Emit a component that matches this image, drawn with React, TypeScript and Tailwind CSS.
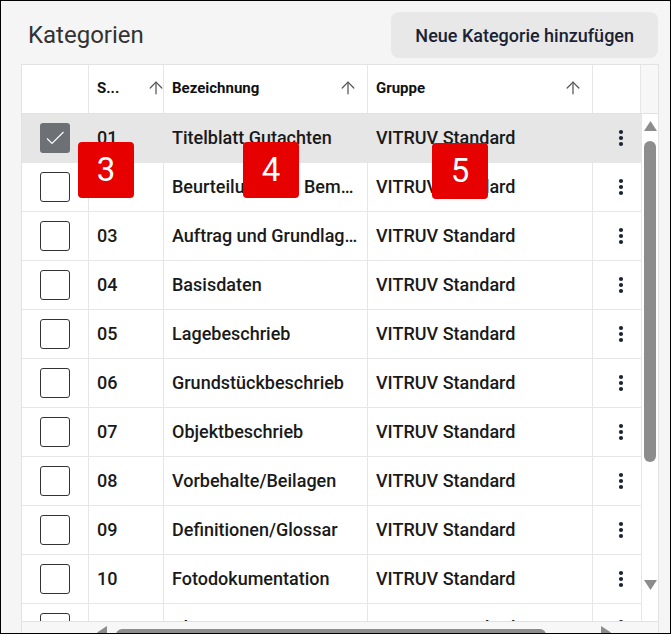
import { ArrowUp } from 'lucide-react'

const rows = [
  { nr: '01', name: 'Titelblatt Gutachten', group: 'VITRUV Standard', checked: true },
  { nr: '02', name: 'Beurteilung und Bemerkungen', group: 'VITRUV Standard' },
  { nr: '03', name: 'Auftrag und Grundlagen', group: 'VITRUV Standard' },
  { nr: '04', name: 'Basisdaten', group: 'VITRUV Standard' },
  { nr: '05', name: 'Lagebeschrieb', group: 'VITRUV Standard' },
  { nr: '06', name: 'Grundstückbeschrieb', group: 'VITRUV Standard' },
  { nr: '07', name: 'Objektbeschrieb', group: 'VITRUV Standard' },
  { nr: '08', name: 'Vorbehalte/Beilagen', group: 'VITRUV Standard' },
  { nr: '09', name: 'Definitionen/Glossar', group: 'VITRUV Standard' },
  { nr: '10', name: 'Fotodokumentation', group: 'VITRUV Standard' },
  { nr: '11', name: 'Pläne', group: 'VITRUV Standard' },
]

function Checkbox({ checked }: { checked?: boolean }) {
  if (checked) {
    return (
      <div className="w-[30px] h-[30px] rounded-[3px] bg-[#6d7176] flex items-center justify-center">
        <svg width="22" height="22" viewBox="0 0 22 22" fill="none">
          <path d="M3 11.5l5 5L19.5 5" stroke="white" strokeWidth="1.1" />
        </svg>
      </div>
    )
  }
  return <div className="w-[30px] h-[30px] rounded-[3px] border border-[#333] bg-white" />
}

function Dots() {
  return (
    <svg width="6" height="18" viewBox="0 0 6 18">
      <circle cx="3" cy="3" r="2.1" fill="#1c2433" />
      <circle cx="3" cy="9" r="2.1" fill="#1c2433" />
      <circle cx="3" cy="15" r="2.1" fill="#1c2433" />
    </svg>
  )
}

function Badge({ n, className }: { n: string; className: string }) {
  return (
    <div
      className={`absolute w-[56px] h-[56px] rounded-[4px] bg-[#e60000] text-white text-[33px] flex items-center justify-center ${className}`}
    >
      {n}
    </div>
  )
}

export default function App() {
  return (
    <div className="relative w-[671px] h-[634px] border border-black bg-[#f5f5f5] overflow-hidden font-['Roboto',sans-serif]">
      {/* Title bar */}
      <div className="flex items-center justify-between h-[63px] pt-[5px] pl-[27px] pr-[12px]">
        <h1 className="text-[24px] text-[#333] font-normal">Kategorien</h1>
        <button className="h-[46px] px-[24px] rounded-[8px] bg-[#e8e8e8] text-[18px] font-medium text-[#1a2234]">
          Neue Kategorie hinzufügen
        </button>
      </div>

      {/* Grid */}
      <div className="ml-[20px] w-[638px] border border-[#e2e2e2] bg-white">
        {/* Header */}
        <div className="flex h-[49px] border-b border-[#e2e2e2] text-[15px] font-bold text-[#111]">
          <div className="w-[67px] border-r border-[#e6e6e6]" />
          <div className="w-[75px] border-r border-[#e6e6e6] flex items-center pl-[8px] pb-[2px]">
            <span className="flex-1 truncate">S...</span>
            <ArrowUp size={20} strokeWidth={1.5} className="text-[#555] mr-[-3px]" />
          </div>
          <div className="w-[204px] border-r border-[#e6e6e6] flex items-center pl-[8px] pr-[9px] pb-[2px]">
            <span className="flex-1 truncate">Bezeichnung</span>
            <ArrowUp size={20} strokeWidth={1.5} className="text-[#555]" />
          </div>
          <div className="w-[225px] border-r border-[#e6e6e6] flex items-center pl-[8px] pr-[9px] pb-[2px]">
            <span className="flex-1 truncate">Gruppe</span>
            <ArrowUp size={20} strokeWidth={1.5} className="text-[#555]" />
          </div>
          <div className="w-[48px] border-r border-[#e6e6e6]" />
          <div className="w-[17px] bg-[#f7f7f7]" />
        </div>

        {/* Body */}
        <div className="flex h-[507px]">
          <div className="w-[619px] overflow-hidden">
            {rows.map((r) => (
              <div
                key={r.nr}
                className={`flex h-[49px] border-b border-[#e6e6e6] text-[18px] font-medium text-[#1a1a1a] ${
                  r.checked ? 'bg-[#e6e6e6]' : ''
                }`}
              >
                <div className="w-[67px] border-r border-[#e6e6e6] flex items-center justify-center pr-[1px]">
                  <Checkbox checked={r.checked} />
                </div>
                <div className="w-[75px] border-r border-[#e6e6e6] flex items-center pl-[8px] pb-[2px]">{r.nr}</div>
                <div className="w-[204px] border-r border-[#e6e6e6] flex items-center pl-[8px] pr-[8px] pb-[2px] min-w-0">
                  <span className="truncate">{r.name}</span>
                </div>
                <div className="w-[225px] border-r border-[#e6e6e6] flex items-center pl-[8px] pb-[2px]">{r.group}</div>
                <div className="w-[48px] flex items-center pl-[25px]">
                  <Dots />
                </div>
              </div>
            ))}
          </div>

          {/* Vertical scrollbar */}
          <div className="w-[17px] border-l border-[#e6e6e6] flex flex-col items-center pt-[7px]">
            <svg width="13" height="10" viewBox="0 0 13 10">
              <path d="M6.5 0L13 10H0z" fill="#8c8c8c" />
            </svg>
            <div className="mt-[10px] w-[12px] h-[321px] rounded-full bg-[#8d8d8d]" />
            <svg width="13" height="10" viewBox="0 0 13 10" className="mt-[118px]">
              <path d="M0 0h13L6.5 10z" fill="#8c8c8c" />
            </svg>
          </div>
        </div>

        {/* Horizontal scrollbar */}
        <div className="flex items-center h-[14px] bg-[#f7f7f7] border-t border-[#e2e2e2] pl-[75px]">
          <svg width="10" height="13" viewBox="0 0 10 13" className="mt-[8px]">
            <path d="M0 6.5L10 0v13z" fill="#8c8c8c" />
          </svg>
          <div className="ml-[9px] mt-[12px] w-[430px] h-[12px] rounded-full bg-[#8d8d8d]" />
          <svg width="10" height="13" viewBox="0 0 10 13" className="ml-[55px] mt-[8px]">
            <path d="M10 6.5L0 0v13z" fill="#8c8c8c" />
          </svg>
        </div>
      </div>

      <Badge n="3" className="left-[77px] top-[141px]" />
      <Badge n="4" className="left-[242px] top-[141px]" />
      <Badge n="5" className="left-[431px] top-[142px]" />
    </div>
  )
}
